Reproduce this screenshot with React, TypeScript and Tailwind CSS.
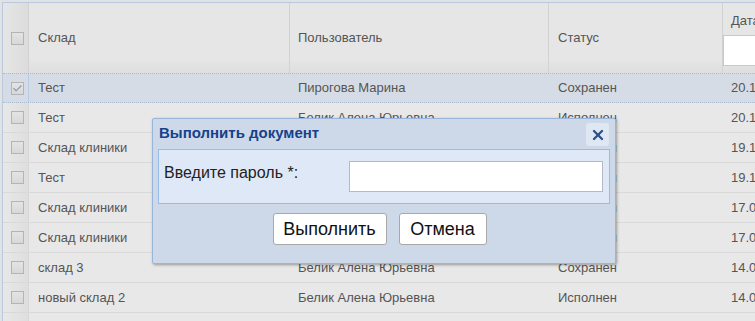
import { Check, X } from "lucide-react";

interface Row {
  store: string;
  user: string;
  status: string;
  date: string;
  selected?: boolean;
}

const rows: Row[] = [
  { store: "Тест", user: "Пирогова Марина", status: "Сохранен", date: "20.11.2019", selected: true },
  { store: "Тест", user: "Белик Алена Юрьевна", status: "Исполнен", date: "20.11.2019" },
  { store: "Склад клиники", user: "Белик Алена Юрьевна", status: "Исполнен", date: "19.11.2019" },
  { store: "Тест", user: "Белик Алена Юрьевна", status: "Исполнен", date: "19.11.2019" },
  { store: "Склад клиники", user: "Белик Алена Юрьевна", status: "Исполнен", date: "17.09.2019" },
  { store: "Склад клиники", user: "Белик Алена Юрьевна", status: "Исполнен", date: "17.09.2019" },
  { store: "склад 3", user: "Белик Алена Юрьевна", status: "Сохранен", date: "14.09.2019" },
  { store: "новый склад 2", user: "Белик Алена Юрьевна", status: "Исполнен", date: "14.09.2019" },
  { store: "", user: "", status: "", date: "" },
];

const cols = "grid grid-cols-[26px_261px_259px_174px_1fr]";

function Checkbox({ checked }: { checked?: boolean }) {
  return (
    <div className="w-[13px] h-[13px] border border-[#b4b4b4] bg-gradient-to-b from-[#e4e4e4] to-[#d8d8d8] flex items-center justify-center">
      {checked && <Check size={11} strokeWidth={2.5} className="text-[#8a9ab0]" />}
    </div>
  );
}

export default function App() {
  return (
    <div
      className="relative w-[755px] h-[321px] overflow-hidden bg-[#e2e2e2] pl-[2px] pt-[2px] text-[13px] text-[#555]"
      style={{ fontFamily: '"Liberation Sans", Arial, sans-serif' }}
    >
      <div className="h-full border-l border-t border-[#b9c9de] bg-[#e8e8e8]">
        {/* header */}
        <div className={`${cols} h-[70px] bg-gradient-to-b from-[#e6e6e6] from-80% to-[#dedede]`}>
          <div className="flex items-center justify-center pl-[3px] border-r border-[#d2d2d2] bg-gradient-to-r from-[#e6e6e6] to-[#dcdcdc]">
            <Checkbox />
          </div>
          <div className="flex items-center pl-[9px] border-r border-[#d2d2d2]">Склад</div>
          <div className="flex items-center pl-[8px] border-r border-[#d2d2d2]">Пользователь</div>
          <div className="flex items-center pl-[9px] border-r border-[#d2d2d2]">Статус</div>
          <div className="flex flex-col overflow-hidden">
            <div className="pl-[8px] pt-[8px] h-[32px] whitespace-nowrap">Дата</div>
            <div className="h-[31px] bg-white border border-[#c8c8c8] w-[200px]"></div>
          </div>
        </div>

        {/* rows */}
        {rows.map((r, i) => (
          <div
            key={i}
            className={`${cols} h-[30px] whitespace-nowrap ${
              r.selected
                ? "bg-[#d5dce5] border-y border-dotted border-[#a9bbd3]"
                : "border-b border-[#d9d9d9]"
            }`}
          >
            <div
              className={`flex items-center justify-center pl-[3px] border-r ${
                r.selected
                  ? "border-[#b9cbe2]"
                  : "border-[#d6d6d6] bg-gradient-to-r from-[#e8e8e8] to-[#dedede]"
              }`}
            >
              <Checkbox checked={r.selected} />
            </div>
            <div className="flex items-center pl-[9px]">{r.store}</div>
            <div className="flex items-center pl-[8px]">{r.user}</div>
            <div className="flex items-center pl-[9px]">{r.status}</div>
            <div className="flex items-center pl-[8px] overflow-hidden">{r.date}</div>
          </div>
        ))}
      </div>

      {/* dialog */}
      <div className="absolute left-[152px] top-[118px] w-[464px] h-[146px] bg-[#cdd9e8] border border-[#99b5dc] rounded-[2px] shadow-[1px_1px_3px_rgba(0,0,0,0.35)] flex flex-col px-[5px]">
        <div className="flex items-center justify-between h-[30px] pt-[1px]">
          <span className="font-bold text-[15px] text-[#15428b] pl-[1px] -mt-[2px]">Выполнить документ</span>
          <button className="w-[23px] h-[23px] rounded-[3px] bg-[#dfe7f3] flex items-center justify-center mr-[1px]">
            <X size={16} strokeWidth={3.5} className="text-[#2d5287]" />
          </button>
        </div>
        <div className="h-[55px] bg-[#dfe8f6] border border-[#99bbe8] flex items-center px-[5px]">
          <span className="text-[16px] text-[#222] w-[185px] -mt-[8px] whitespace-nowrap">Введите пароль *:</span>
          <div className="w-[254px] h-[31px] bg-white border border-[#b5b8c8]"></div>
        </div>
        <div className="flex items-center justify-center gap-[12px] pt-[9px] pr-[9px]">
          <button className="w-[114px] h-[32px] bg-white border border-[#a8a8a8] rounded-[3px] text-[18px] leading-none text-[#111] whitespace-nowrap">
            Выполнить
          </button>
          <button className="w-[88px] h-[32px] bg-white border border-[#a8a8a8] rounded-[3px] text-[18px] leading-none text-[#111] whitespace-nowrap">
            Отмена
          </button>
        </div>
      </div>
    </div>
  );
}
